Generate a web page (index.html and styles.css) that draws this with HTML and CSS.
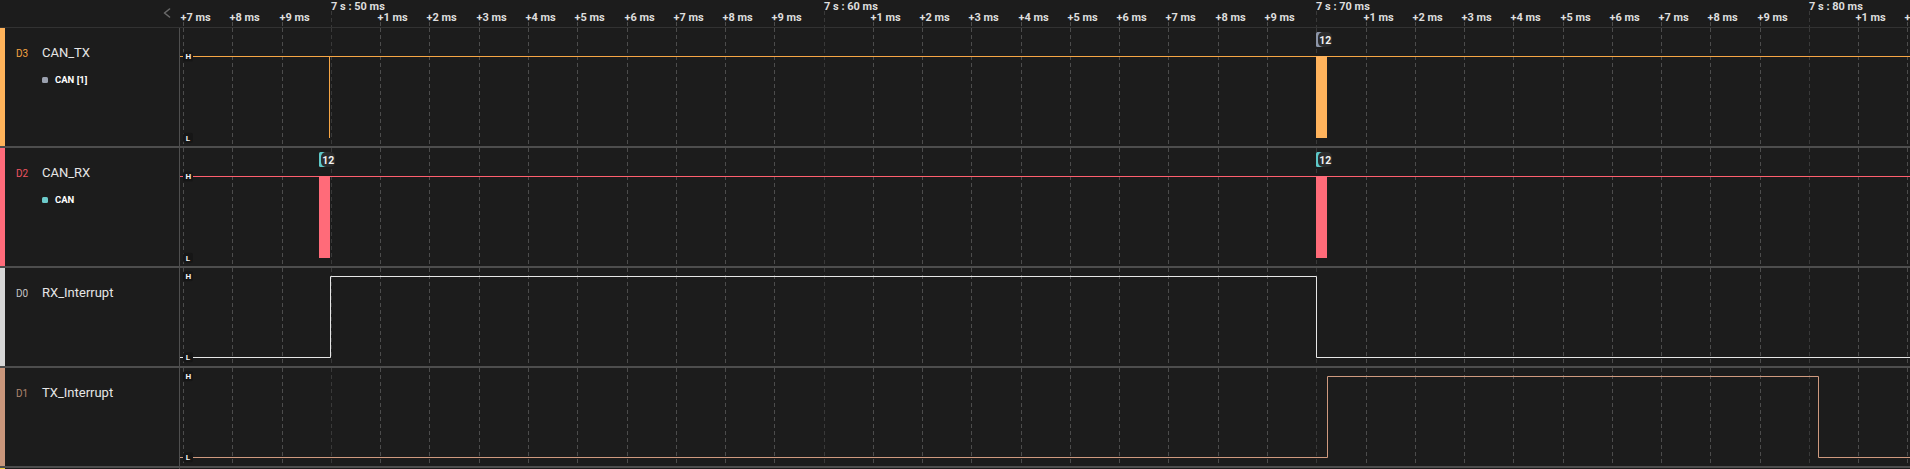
FILE: index.html
```html
<!DOCTYPE html>
<html>
<head>
<meta charset="utf-8">
<title>Logic analyzer</title>
<link rel="stylesheet" href="styles.css">
</head>
<body>
<div class="app">
  <div class="header">
    <div class="hdr-left">
      <svg class="chev" width="8" height="10" viewBox="0 0 8 10"><polyline points="6.5,1 1.5,5 6.5,9" /></svg>
    </div>
    <div class="axis">
      <svg width="1730" height="27" viewBox="0 0 1730 27">
        <g class="tk-minor">
          <line x1="3.5" y1="22" x2="3.5" y2="27"/><line x1="52.5" y1="22" x2="52.5" y2="27"/><line x1="102.5" y1="22" x2="102.5" y2="27"/>
          <line x1="200.5" y1="22" x2="200.5" y2="27"/><line x1="249.5" y1="22" x2="249.5" y2="27"/><line x1="299.5" y1="22" x2="299.5" y2="27"/><line x1="348.5" y1="22" x2="348.5" y2="27"/><line x1="397.5" y1="22" x2="397.5" y2="27"/><line x1="447.5" y1="22" x2="447.5" y2="27"/><line x1="496.5" y1="22" x2="496.5" y2="27"/><line x1="545.5" y1="22" x2="545.5" y2="27"/><line x1="594.5" y1="22" x2="594.5" y2="27"/>
          <line x1="693.5" y1="22" x2="693.5" y2="27"/><line x1="742.5" y1="22" x2="742.5" y2="27"/><line x1="791.5" y1="22" x2="791.5" y2="27"/><line x1="841.5" y1="22" x2="841.5" y2="27"/><line x1="890.5" y1="22" x2="890.5" y2="27"/><line x1="939.5" y1="22" x2="939.5" y2="27"/><line x1="988.5" y1="22" x2="988.5" y2="27"/><line x1="1038.5" y1="22" x2="1038.5" y2="27"/><line x1="1087.5" y1="22" x2="1087.5" y2="27"/>
          <line x1="1186.5" y1="22" x2="1186.5" y2="27"/><line x1="1235.5" y1="22" x2="1235.5" y2="27"/><line x1="1284.5" y1="22" x2="1284.5" y2="27"/><line x1="1333.5" y1="22" x2="1333.5" y2="27"/><line x1="1383.5" y1="22" x2="1383.5" y2="27"/><line x1="1432.5" y1="22" x2="1432.5" y2="27"/><line x1="1481.5" y1="22" x2="1481.5" y2="27"/><line x1="1530.5" y1="22" x2="1530.5" y2="27"/><line x1="1580.5" y1="22" x2="1580.5" y2="27"/>
          <line x1="1678.5" y1="22" x2="1678.5" y2="27"/><line x1="1727.5" y1="22" x2="1727.5" y2="27"/>
        </g>
        <g class="tk-major">
          <line x1="151.5" y1="11" x2="151.5" y2="27"/><line x1="644.5" y1="11" x2="644.5" y2="27"/><line x1="1136.5" y1="11" x2="1136.5" y2="27"/><line x1="1629.5" y1="11" x2="1629.5" y2="27"/>
        </g>
        <g class="lbl-minor">
          <text x="0.5" y="21">+7 ms</text><text x="49.5" y="21">+8 ms</text><text x="99.5" y="21">+9 ms</text>
          <text x="197.5" y="21">+1 ms</text><text x="246.5" y="21">+2 ms</text><text x="296.5" y="21">+3 ms</text><text x="345.5" y="21">+4 ms</text><text x="394.5" y="21">+5 ms</text><text x="444.5" y="21">+6 ms</text><text x="493.5" y="21">+7 ms</text><text x="542.5" y="21">+8 ms</text><text x="591.5" y="21">+9 ms</text>
          <text x="690.5" y="21">+1 ms</text><text x="739.5" y="21">+2 ms</text><text x="788.5" y="21">+3 ms</text><text x="838.5" y="21">+4 ms</text><text x="887.5" y="21">+5 ms</text><text x="936.5" y="21">+6 ms</text><text x="985.5" y="21">+7 ms</text><text x="1035.5" y="21">+8 ms</text><text x="1084.5" y="21">+9 ms</text>
          <text x="1183.5" y="21">+1 ms</text><text x="1232.5" y="21">+2 ms</text><text x="1281.5" y="21">+3 ms</text><text x="1330.5" y="21">+4 ms</text><text x="1380.5" y="21">+5 ms</text><text x="1429.5" y="21">+6 ms</text><text x="1478.5" y="21">+7 ms</text><text x="1527.5" y="21">+8 ms</text><text x="1577.5" y="21">+9 ms</text>
          <text x="1675.5" y="21">+1 ms</text><text x="1724.5" y="21">+2 ms</text>
        </g>
        <g class="lbl-major">
          <text x="151" y="9.5">7 s : 50 ms</text><text x="644" y="9.5">7 s : 60 ms</text><text x="1136" y="9.5">7 s : 70 ms</text><text x="1629" y="9.5">7 s : 80 ms</text>
        </g>
      </svg>
    </div>
  </div>

  <div class="row can">
    <div class="label">
      <div class="strip c-tx"></div>
      <div class="info">
        <div class="head"><span class="code t-tx">D3</span><span class="name">CAN_TX</span></div>
        <div class="proto"><span class="dot d-gray"></span><span>CAN [1]</span></div>
      </div>
    </div>
    <div class="wave">
      <svg width="1730" height="118" viewBox="0 0 1730 118">
        <defs>
          <g id="grid">
            <g class="gr-minor">
              <line x1="3.5" y1="0" x2="3.5" y2="120"/><line x1="52.5" y1="0" x2="52.5" y2="120"/><line x1="102.5" y1="0" x2="102.5" y2="120"/>
              <line x1="200.5" y1="0" x2="200.5" y2="120"/><line x1="249.5" y1="0" x2="249.5" y2="120"/><line x1="299.5" y1="0" x2="299.5" y2="120"/><line x1="348.5" y1="0" x2="348.5" y2="120"/><line x1="397.5" y1="0" x2="397.5" y2="120"/><line x1="447.5" y1="0" x2="447.5" y2="120"/><line x1="496.5" y1="0" x2="496.5" y2="120"/><line x1="545.5" y1="0" x2="545.5" y2="120"/><line x1="594.5" y1="0" x2="594.5" y2="120"/>
              <line x1="693.5" y1="0" x2="693.5" y2="120"/><line x1="742.5" y1="0" x2="742.5" y2="120"/><line x1="791.5" y1="0" x2="791.5" y2="120"/><line x1="841.5" y1="0" x2="841.5" y2="120"/><line x1="890.5" y1="0" x2="890.5" y2="120"/><line x1="939.5" y1="0" x2="939.5" y2="120"/><line x1="988.5" y1="0" x2="988.5" y2="120"/><line x1="1038.5" y1="0" x2="1038.5" y2="120"/><line x1="1087.5" y1="0" x2="1087.5" y2="120"/>
              <line x1="1186.5" y1="0" x2="1186.5" y2="120"/><line x1="1235.5" y1="0" x2="1235.5" y2="120"/><line x1="1284.5" y1="0" x2="1284.5" y2="120"/><line x1="1333.5" y1="0" x2="1333.5" y2="120"/><line x1="1383.5" y1="0" x2="1383.5" y2="120"/><line x1="1432.5" y1="0" x2="1432.5" y2="120"/><line x1="1481.5" y1="0" x2="1481.5" y2="120"/><line x1="1530.5" y1="0" x2="1530.5" y2="120"/><line x1="1580.5" y1="0" x2="1580.5" y2="120"/>
              <line x1="1678.5" y1="0" x2="1678.5" y2="120"/><line x1="1727.5" y1="0" x2="1727.5" y2="120"/>
            </g>
            <g class="gr-major">
              <line x1="151.5" y1="0" x2="151.5" y2="120"/><line x1="644.5" y1="0" x2="644.5" y2="120"/><line x1="1136.5" y1="0" x2="1136.5" y2="120"/><line x1="1629.5" y1="0" x2="1629.5" y2="120"/>
            </g>
          </g>
        </defs>
        <use href="#grid"/>
        <line class="sig tx" x1="0" y1="28.5" x2="1730" y2="28.5"/>
        <line class="sig tx" x1="149.5" y1="28.5" x2="149.5" y2="110"/>
        <rect class="bar b-tx" x="1136" y="28" width="11" height="82"/>
        <g class="badge" transform="translate(1136,4)">
          <rect class="acc a-gray" x="0" y="0" width="8" height="15" rx="1.5"/>
          <rect class="bx" x="2" y="0" width="14" height="15" rx="5"/>
          <text x="9.3" y="12">12</text>
        </g>
        <rect class="lvbg" x="3" y="23.5" width="10" height="10" rx="2"/>
        <text class="lvl" x="5.5" y="31.3">H</text>
        <rect class="lvbg" x="3" y="104.7" width="10" height="10" rx="2"/>
        <text class="lvl" x="5.7" y="112.5">L</text>
      </svg>
    </div>
  </div>

  <div class="row can">
    <div class="label">
      <div class="strip c-rx"></div>
      <div class="info">
        <div class="head"><span class="code t-rx">D2</span><span class="name">CAN_RX</span></div>
        <div class="proto"><span class="dot d-teal"></span><span>CAN</span></div>
      </div>
    </div>
    <div class="wave">
      <svg width="1730" height="118" viewBox="0 0 1730 118">
        <use href="#grid"/>
        <line class="sig rx" x1="0" y1="28.5" x2="1730" y2="28.5"/>
        <rect class="bar b-rx" x="139" y="28" width="11" height="82"/>
        <rect class="bar b-rx" x="1136" y="28" width="11" height="82"/>
        <g class="badge" transform="translate(139,4)">
          <rect class="acc a-teal" x="0" y="0" width="8" height="15" rx="1.5"/>
          <rect class="bx" x="2" y="0" width="14" height="15" rx="5"/>
          <text x="9.3" y="12">12</text>
        </g>
        <g class="badge" transform="translate(1136,4)">
          <rect class="acc a-teal" x="0" y="0" width="8" height="15" rx="1.5"/>
          <rect class="bx" x="2" y="0" width="14" height="15" rx="5"/>
          <text x="9.3" y="12">12</text>
        </g>
        <rect class="lvbg" x="3" y="23.5" width="10" height="10" rx="2"/>
        <text class="lvl" x="5.5" y="31.3">H</text>
        <rect class="lvbg" x="3" y="104.7" width="10" height="10" rx="2"/>
        <text class="lvl" x="5.7" y="112.5">L</text>
      </svg>
    </div>
  </div>

  <div class="row dig">
    <div class="label">
      <div class="strip c-d0"></div>
      <div class="info">
        <div class="head"><span class="code t-d0">D0</span><span class="name">RX_Interrupt</span></div>
      </div>
    </div>
    <div class="wave">
      <svg width="1730" height="98" viewBox="0 0 1730 98">
        <use href="#grid"/>
        <path class="sig d0" d="M0 89.5 H150.5 V8.5 H1136.5 V89.5 H1730"/>
        <rect class="lvbg" x="3" y="3.2" width="10" height="10" rx="2"/>
        <text class="lvl" x="5.5" y="11">H</text>
        <rect class="lvbg" x="3" y="84.3" width="10" height="10" rx="2"/>
        <text class="lvl" x="5.7" y="92.2">L</text>
      </svg>
    </div>
  </div>

  <div class="row dig">
    <div class="label">
      <div class="strip c-d1"></div>
      <div class="info">
        <div class="head"><span class="code t-d1">D1</span><span class="name">TX_Interrupt</span></div>
      </div>
    </div>
    <div class="wave">
      <svg width="1730" height="98" viewBox="0 0 1730 98">
        <use href="#grid"/>
        <path class="sig d1" d="M0 89.5 H1147.5 V8.5 H1638.5 V89.5 H1730"/>
        <rect class="lvbg" x="3" y="3.2" width="10" height="10" rx="2"/>
        <text class="lvl" x="5.5" y="11">H</text>
        <rect class="lvbg" x="3" y="84.3" width="10" height="10" rx="2"/>
        <text class="lvl" x="5.7" y="92.2">L</text>
      </svg>
    </div>
  </div>

  <div class="row peek">
    <div class="label">
      <div class="strip c-d4"></div>
    </div>
    <div class="wave"></div>
  </div>
</div>
</body>
</html>
```

FILE: styles.css
```css
html, body {
  margin: 0;
  padding: 0;
  background: #1c1c1c;
  overflow: hidden;
}
.app {
  width: 1910px;
  font-family: Roboto, "Liberation Sans", sans-serif;
  color: #e4e4e4;
}
.header {
  display: flex;
  height: 27px;
  border-bottom: 1px solid #323232;
}
.hdr-left {
  width: 180px;
  flex: none;
  display: flex;
  justify-content: flex-end;
  align-items: flex-start;
  padding: 8px 9px 0 0;
  box-sizing: border-box;
}
.chev polyline {
  fill: none;
  stroke: #6a6a6a;
  stroke-width: 1.6;
  stroke-linecap: round;
  stroke-linejoin: round;
}
.axis { flex: 1; overflow: hidden; }
.axis svg, .wave svg { display: block; }

.tk-minor line, .gr-minor line {
  stroke: #4c4c4c;
  stroke-width: 1;
  stroke-dasharray: 4 3;
}
.tk-major line, .gr-major line {
  stroke: #393939;
  stroke-width: 1;
  stroke-dasharray: 4 3;
}
.lbl-minor text, .lbl-major text {
  font-family: Roboto, "Liberation Sans", sans-serif;
  font-weight: 700;
  font-size: 11px;
  fill: #dedede;
}

.row {
  display: flex;
  border-bottom: 2px solid #4d4d4d;
}
.row.can { height: 118px; }
.row.dig { height: 98px; }
.row.peek { height: 1px; border-bottom: 0; }
.label {
  width: 179px;
  flex: none;
  display: flex;
  border-right: 1px solid #4f4f4f;
}
.strip { width: 5px; flex: none; }
.c-tx { background: #ffb35a; }
.c-rx { background: #ff6b7a; }
.c-d0 { background: #d6d6d6; }
.c-d1 { background: #c9967b; }
.c-d4 { background: #f3cf3f; }

.info {
  padding: 17px 0 0 11px;
}
.head {
  display: flex;
  align-items: baseline;
  line-height: 16px;
}
.code {
  width: 26px;
  font-size: 10px;
}
.t-tx { color: #f5a443; }
.t-rx { color: #ee5461; }
.t-d0 { color: #c6c6c6; }
.t-d1 { color: #b0866f; }
.name {
  font-size: 13px;
  color: #e6e6e6;
}
.proto {
  display: flex;
  align-items: center;
  gap: 7px;
  margin: 11.5px 0 0 26px;
  font-size: 9.5px;
  font-weight: 700;
  line-height: 12px;
  color: #ffffff;
}
.dot {
  width: 6px;
  height: 6px;
  border-radius: 1.5px;
}
.d-gray { background: #9aa0ae; }
.d-teal { background: #6ccaca; }

.wave { flex: 1; overflow: hidden; }

.sig {
  fill: none;
  stroke-width: 1;
}
.sig.tx { stroke: #f7a645; }
.sig.rx { stroke: #ff5f6e; }
.sig.d0 { stroke: #e6e6e6; }
.sig.d1 { stroke: #cf9a7f; }
.bar.b-tx { fill: #ffb35c; }
.bar.b-rx { fill: #ff6b79; }

.badge .acc.a-gray { fill: #8c95a8; }
.badge .acc.a-teal { fill: #5ec8c8; }
.badge .bx { fill: #2b2b2b; }
.badge text {
  font-family: Roboto, "Liberation Sans", sans-serif;
  font-weight: 700;
  font-size: 10.5px;
  fill: #f2f2f2;
  text-anchor: middle;
}
.lvbg { fill: #161616; }
.lvl {
  font-family: Roboto, "Liberation Sans", sans-serif;
  font-weight: 700;
  font-size: 8px;
  fill: #f4f4f4;
}
```
